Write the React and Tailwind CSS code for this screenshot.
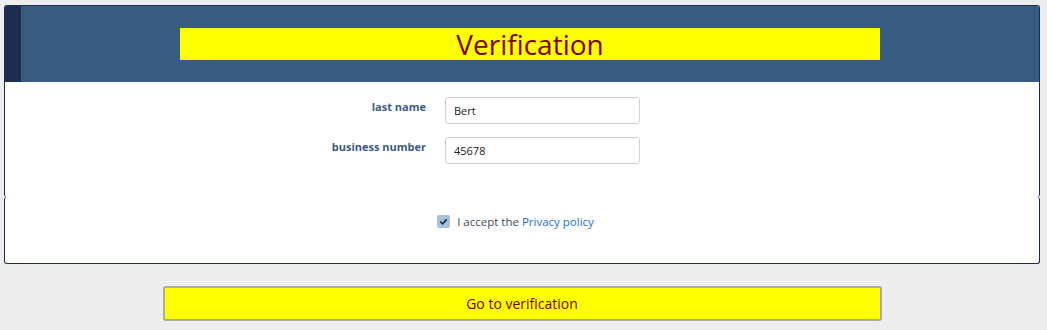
import React from "react";

function Field({ label, value }) {
  return (
    <div className="flex items-start">
      <label className="w-[200px] pt-[3px] text-right text-[11px] font-bold leading-[14px] text-[#3d5c7f]">
        {label}
      </label>
      <input
        className="ml-[19px] h-[27px] w-[195px] rounded-[3px] border border-[#cfcfcf] bg-white px-[8px] text-[11px] text-[#222] outline-none"
        defaultValue={value}
      />
    </div>
  );
}

export default function App() {
  return (
    <div
      className="min-h-[330px] w-full bg-[#ededed] pt-[5px]"
      style={{ fontFamily: '"Open Sans", "Noto Sans", sans-serif' }}
    >
      <div className="ml-[4px] w-[1036px]">
        {/* top box with header and fields */}
        <div className="overflow-hidden rounded-[3px] border border-b-0 border-[#1b2e4f] bg-white">
          <div className="flex h-[76px] bg-[#375c7f]">
            <div className="w-[16px] bg-[#1b2e4f]" />
            <div className="flex flex-1 items-center justify-center">
              <div className="flex h-[32px] w-[700px] items-center justify-center bg-[#ffff00] pb-[1px] text-[28px] leading-none text-[#800000]">
                Verification
              </div>
            </div>
          </div>
          <div className="flex flex-col gap-[13px] pb-[33px] pl-[221px] pt-[15px]">
            <Field label="last name" value="Bert" />
            <Field label="business number" value="45678" />
          </div>
        </div>

        {/* bottom box with checkbox */}
        <div className="flex h-[67px] items-start justify-center rounded-[3px] border border-t-0 border-[#1b2e4f] bg-white pr-[13px] pt-[16px]">
          <div className="flex items-center gap-[7px]">
            <span className="flex h-[13px] w-[13px] items-center justify-center rounded-[2px] bg-[#a9c0dc]">
              <svg width="9" height="9" viewBox="0 0 10 10">
                <path d="M1.5 5.2 L4 7.6 L8.6 2.6" fill="none" stroke="#1b2e4f" strokeWidth="1.9" />
              </svg>
            </span>
            <span className="text-[11.5px] text-[#3e4b5c]">
              I accept the <span className="text-[#1a6fdf]">Privacy policy</span>
            </span>
          </div>
        </div>

        <div className="mt-[22px] flex justify-center">
          <button className="h-[35px] w-[719px] rounded-[3px] border-2 border-[#a9a9a9] bg-[#ffff00] text-[14px] text-[#800000]">
            Go to verification
          </button>
        </div>
      </div>
    </div>
  );
}
